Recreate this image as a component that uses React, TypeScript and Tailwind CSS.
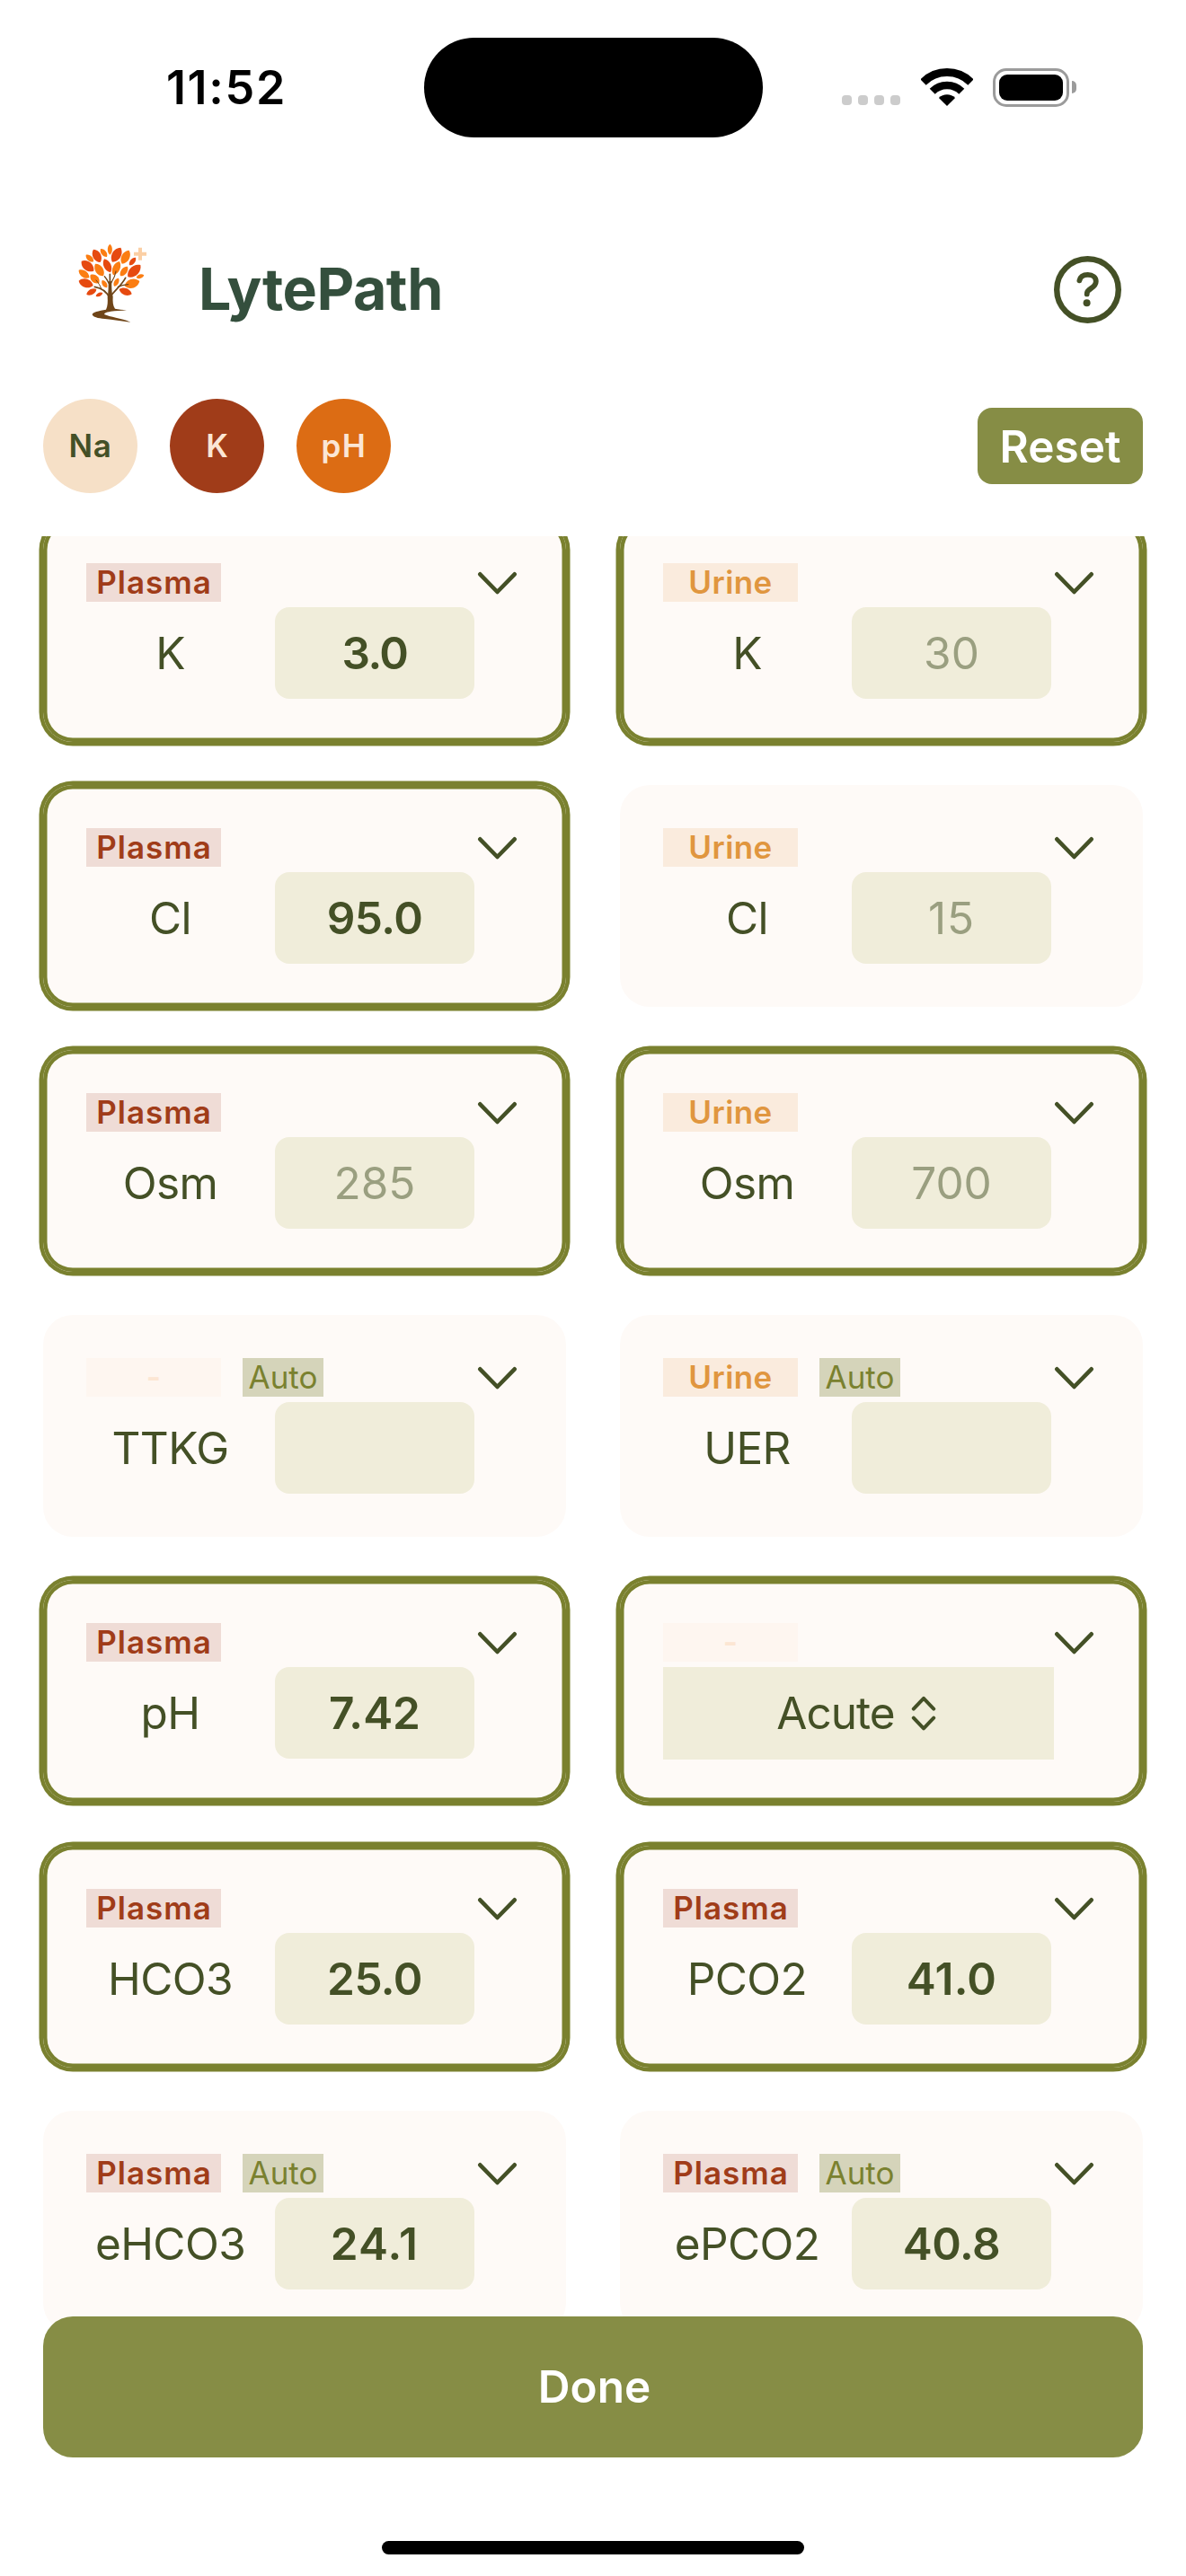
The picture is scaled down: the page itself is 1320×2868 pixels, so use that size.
import React from "react";

type TagKind = "Plasma" | "Urine" | "-";

interface Lab {
  name: string;
  tag: TagKind;
  auto?: boolean;
  active?: boolean;
  value?: string;
  placeholder?: string;
  tracking?: string;
  picker?: string;
  offset?: string;
}

const labs: Lab[] = [
  { name: "K", tag: "Plasma", active: true, value: "3.0", tracking: "tracking-[-1.5px]" },
  { name: "K", tag: "Urine", active: true, placeholder: "30" },
  { name: "Cl", tag: "Plasma", active: true, value: "95.0", tracking: "tracking-[-0.5px]" },
  { name: "Cl", tag: "Urine", placeholder: "15", tracking: "tracking-[1px]" },
  { name: "Osm", tag: "Plasma", active: true, placeholder: "285" },
  { name: "Osm", tag: "Urine", active: true, placeholder: "700" },
  { name: "TTKG", tag: "-", auto: true },
  { name: "UER", tag: "Urine", auto: true },
  { name: "pH", tag: "Plasma", active: true, value: "7.42", tracking: "tracking-[0px]" },
  { name: "", tag: "-", active: true, picker: "Acute" },
  { name: "HCO3", tag: "Plasma", active: true, value: "25.0", tracking: "tracking-[-0.5px]", offset: "mt-px" },
  { name: "PCO2", tag: "Plasma", active: true, value: "41.0", tracking: "tracking-[0.3px]", offset: "mt-px" },
  { name: "eHCO3", tag: "Plasma", auto: true, value: "24.1", tracking: "tracking-[1.2px]" },
  { name: "ePCO2", tag: "Plasma", auto: true, value: "40.8", tracking: "tracking-[-0.5px]" },
];

const tagStyles: Record<TagKind, string> = {
  Plasma: "bg-[#efdcd6] text-[#a03c19] tracking-[1px] pl-[1px]",
  Urine: "bg-[#faebdd] text-[#e0963f] tracking-[0.4px]",
  "-": "bg-[#fef6f0] text-[#fce6d3]",
};

const R = "#e64a10";
const O = "#fb7d12";
// [x1, y1, x2, y2, width, colour]: each leaf runs from one tip to the other
const leaves: [number, number, number, number, number, string][] = [
  [187, 65, 187, 101, 15, O],
  [156, 81, 177, 108, 17, O],
  [132, 83, 155, 126, 27, R],
  [107, 101, 132, 124, 17, O],
  [223, 77, 195, 125, 30, R],
  [251, 86, 227, 131, 27, O],
  [273, 110, 252, 136, 16, R],
  [92, 122, 133, 155, 29, R],
  [168, 115, 189, 160, 24, R],
  [138, 131, 165, 172, 26, O],
  [219, 123, 198, 169, 24, O],
  [246, 140, 222, 172, 20, O],
  [289, 135, 247, 175, 31, R],
  [83, 152, 118, 178, 22, O],
  [122, 168, 151, 195, 24, O],
  [275, 177, 301, 169, 14, O],
  [83, 188, 131, 204, 28, R],
  [161, 186, 177, 211, 15, O],
  [216, 179, 201, 206, 15, O],
  [236, 205, 286, 189, 30, O],
  [109, 234, 142, 216, 18, R],
  [140, 239, 163, 228, 12, R],
  [218, 216, 260, 232, 23, R],
];

function leafPath([x1, y1, x2, y2, w]: [number, number, number, number, number, string]) {
  const dx = x2 - x1;
  const dy = y2 - y1;
  const len = Math.hypot(dx, dy);
  const nx = (-dy / len) * w * 0.67;
  const ny = (dx / len) * w * 0.67;
  const at = (t: number, s: number) =>
    `${(x1 + dx * t + nx * s).toFixed(1)} ${(y1 + dy * t + ny * s).toFixed(1)}`;
  return `M${at(0, 0)}C${at(0.22, 1)} ${at(0.78, 1)} ${at(1, 0)}C${at(0.78, -1)} ${at(0.22, -1)} ${at(0, 0)}Z`;
}

function TreeLogo() {
  return (
    <svg className="h-[90px] w-[78px]" viewBox="81 60 234 270">
      {leaves.map((l, i) => (
        <path key={i} d={leafPath(l)} fill={l[5]} />
      ))}
      <g stroke="#6f4518" fill="none" strokeLinecap="round">
        <path d="M188 240C188 215 187 190 187 166" strokeWidth="5" />
        <path d="M186 246C178 226 160 212 136 208" strokeWidth="5" />
        <path d="M183 196C178 184 174 178 169 173" strokeWidth="4" />
        <path d="M190 196C196 186 204 176 207 156" strokeWidth="3.5" />
        <path d="M192 236C206 218 226 202 239 178" strokeWidth="5" />
        <path d="M214 208C224 203 234 201 248 200" strokeWidth="4" />
        <path d="M158 214C154 204 150 196 141 186" strokeWidth="3" />
      </g>
      <path
        d="M182 190L193 190C192 210 194 232 197 240C196 258 197 272 204 281C215 284 230 284 243 286C225 289 205 288 190 290C172 293 165 297 170 301C184 308 226 313 256 326C226 323 196 318 170 315C146 314 130 308 128 301C128 293 150 288 174 284C180 272 180 256 179 243C182 226 182 210 182 190Z"
        fill="#6f4518"
      />
      <path d="M282 77h12v15h15v12h-15v15h-12v-15h-15v-12h15z" fill="#fbcfa4" />
    </svg>
  );
}

function StatusBar() {
  return (
    <div className="flex h-[194px] shrink-0 items-center">
      <div className="ml-[32px] w-[440px] pt-[2px] text-center text-[52px] leading-none font-semibold tracking-[1.7px] text-black">
        11:52
      </div>
      <div className="h-[111px] w-[377px] rounded-full bg-black" />
      <div className="ml-[88px] flex gap-[7px] pt-[29px]">
        {[0, 1, 2, 3].map((i) => (
          <span key={i} className="h-[11px] w-[11px] rounded-[4px] bg-[#cccccc]" />
        ))}
      </div>
      <svg className="ml-[22.5px] h-[42px] w-[58px]" viewBox="0 0 58 42">
        <path d="M2.5 15.5A37.5 37.5 0 0 1 55.5 15.5" fill="none" stroke="#000" strokeWidth="9" />
        <path d="M12.7 25.7A23 23 0 0 1 45.3 25.7" fill="none" stroke="#000" strokeWidth="8.5" />
        <path d="M29 42L19.9 33A13 13 0 0 1 38.1 33Z" fill="#000" />
      </svg>
      <div className="ml-[22.5px] h-[43px] w-[85px] rounded-[15px] border-[3px] border-[#9b9b9b] p-[4px]">
        <div className="h-full w-full rounded-[9px] bg-black" />
      </div>
      <div className="ml-[3px] h-[14px] w-[5px] rounded-r-full bg-[#9b9b9b]" />
    </div>
  );
}

function HelpIcon() {
  return (
    <svg className="h-[75px] w-[75px]" viewBox="0 0 75 75" fill="none" stroke="#445026">
      <circle cx="37.5" cy="37.5" r="34.3" strokeWidth="6.4" />
      <path
        d="M28.4 27.4C29.4 22.8 33 20.9 37.7 20.9C43.2 20.9 46.8 23.8 46.8 28.2C46.8 32 44.8 33.8 41.4 36C38 38.1 36.7 39.4 36.7 42.4"
        strokeWidth="5.8"
        strokeLinecap="round"
        strokeLinejoin="round"
      />
      <circle cx="36.6" cy="52.3" r="4" fill="#445026" stroke="none" />
    </svg>
  );
}

function LabCard({ lab }: { lab: Lab }) {
  return (
    <div
      className={
        "flex h-[247px] flex-col rounded-[33px] bg-[#fefaf7] px-[48px] pt-[48px] " +
        (lab.active ? "ring-[4.5px] ring-[#7a812f] inset-ring-[4.5px] inset-ring-[#7a812f] " : "") +
        (lab.offset ?? "")
      }
    >
      <div className="flex h-[43px] items-center">
        <div
          className={
            "flex h-[43px] w-[150px] items-center justify-center text-[35px] leading-none font-semibold " +
            tagStyles[lab.tag]
          }
        >
          {lab.tag}
        </div>
        {lab.auto && (
          <div className="ml-[24px] flex h-[43px] w-[90px] items-center justify-center bg-[#d5d4ba] text-[35px] leading-none text-[#7a812f]">
            Auto
          </div>
        )}
        <svg
          className="mr-[6px] ml-auto h-[26px] w-[45px]"
          viewBox="0 0 45 26"
          fill="none"
          stroke="#445026"
          strokeWidth="4.6"
          strokeLinecap="round"
          strokeLinejoin="round"
        >
          <path d="M3.3 3.3L22.5 23L41.7 3.3" />
        </svg>
      </div>
      {lab.picker ? (
        <div className="mt-[6px] flex h-[103px] w-[435px] items-center justify-center bg-[#f0edda] pr-[5px] text-[49.5px] leading-none tracking-[-0.95px] text-[#445026]">
          {lab.picker}
          <svg
            className="ml-[18px] h-[39px] w-[28px]"
            viewBox="0 0 28 39"
            fill="none"
            stroke="#445026"
            strokeWidth="4"
            strokeLinecap="round"
            strokeLinejoin="round"
          >
            <path d="M2.8 14.6L14 2.8L25.2 14.6M2.8 24.6L14 36.4L25.2 24.6" />
          </svg>
        </div>
      ) : (
        <div className="mt-[6px] flex h-[102px] items-center leading-none text-[#445026]">
          <div className="w-[187px] pt-[2px] text-center text-[49.5px] tracking-[-0.6px]">
            {lab.name}
          </div>
          <div
            className={
              "ml-[23px] flex h-[102px] w-[222px] items-center justify-center rounded-[16px] bg-[#f0edda] pt-[1px] text-[49.5px] " +
              (lab.value ? "font-semibold " : "text-[#9a9f80] ") +
              (lab.tracking ?? "")
            }
          >
            {lab.value ?? lab.placeholder}
          </div>
        </div>
      )}
    </div>
  );
}

export default function App() {
  return (
    <div className="flex h-[2868px] w-[1320px] flex-col overflow-hidden bg-white font-[Inter,sans-serif]">
      <StatusBar />

      <header className="mt-[36px] flex h-[184px] shrink-0 items-center pr-[72px] pl-[87px]">
        <div className="pb-[14px]">
          <TreeLogo />
        </div>
        <h1 className="ml-[56px] text-[64.5px] leading-none font-bold tracking-[-0.5px] text-[#344f3d]">
          LytePath
        </h1>
        <div className="ml-auto">
          <HelpIcon />
        </div>
      </header>

      <div className="mt-[30px] mb-[48px] flex h-[105px] shrink-0 items-center gap-[36px] px-[48px] text-[35px] leading-none font-semibold">
        <div className="flex h-[105px] w-[105px] items-center justify-center rounded-full bg-[#f6e0c7] tracking-[0.6px] text-[#445026]">
          Na
        </div>
        <div className="flex h-[105px] w-[105px] items-center justify-center rounded-full bg-[#a03c19] text-[#fbe6d5]">
          K
        </div>
        <div className="flex h-[105px] w-[105px] items-center justify-center rounded-full bg-[#dc6c14] pl-[1px] tracking-[1.5px] text-[#fbe6d5]">
          pH
        </div>
        <button className="ml-auto h-[85px] w-[184px] rounded-[16px] bg-[#868d45] text-[49.5px] leading-[86px] text-white">
          Reset
        </button>
      </div>

      <main className="h-[2012px] shrink-0 overflow-hidden">
        <div className="-mt-[18px] grid grid-cols-2 gap-x-[60px] gap-y-[48px] px-[48px]">
          {labs.map((lab, i) => (
            <LabCard key={i} lab={lab} />
          ))}
        </div>
      </main>

      <div className="relative -mt-[30px] shrink-0 px-[48px]">
        <button className="h-[157px] w-full rounded-[33px] bg-[#868d45] pt-[1px] pl-[3px] text-[49.5px] leading-none font-semibold text-white">
          Done
        </button>
      </div>

      <div className="mx-auto mt-[93px] h-[15px] w-[470px] shrink-0 rounded-full bg-black" />
    </div>
  );
}
